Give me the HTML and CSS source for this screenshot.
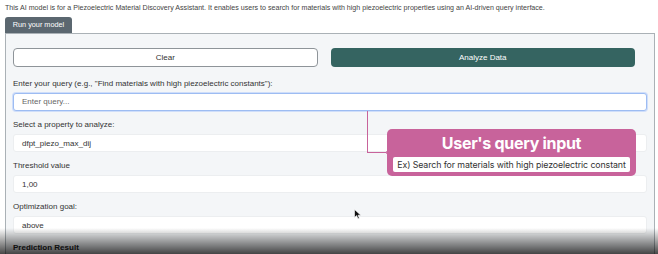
FILE: index.html
```html
<!DOCTYPE html>
<html lang="en">
<head>
    <meta charset="UTF-8">
    <title>Piezoelectric Material Discovery Assistant</title>
    <link rel="stylesheet" href="styles.css">
</head>
<body>
    <div class="page">
        <p class="intro">This AI model is for a Piezoelectric Material Discovery Assistant. It enables users to search for materials with high piezoelectric properties using an AI-driven query interface.</p>
        <div class="tab">Run your model</div>
        <div class="panel">
            <div class="btn-row">
                <div class="btn btn-clear">Clear</div>
                <div class="btn btn-run">Analyze Data</div>
            </div>
            <div class="field field-first">
                <div class="label">Enter your query (e.g., "Find materials with high piezoelectric constants"):</div>
                <div class="box box-focus placeholder">Enter query...</div>
            </div>
            <div class="field">
                <div class="label">Select a property to analyze:</div>
                <div class="box">dfpt_piezo_max_dij</div>
            </div>
            <div class="field">
                <div class="label">Threshold value</div>
                <div class="box">1,00</div>
            </div>
            <div class="field">
                <div class="label">Optimization goal:</div>
                <div class="box">above</div>
            </div>
            <div class="result">Prediction Result</div>
        </div>

        <!-- annotation over the form -->
        <div class="connector"></div>
        <div class="note">
            <div class="note-title">User's query input</div>
            <div class="note-body">Ex) Search for materials with high piezoelectric constant</div>
        </div>
        <svg class="cursor" width="8" height="11" viewBox="0 0 8 11">
            <path d="M0.5 0.5 L0.5 8.5 L2.6 6.6 L4 9.8 L5.3 9.2 L4 6.2 L6.8 6.2 Z" fill="#111" stroke="#fff" stroke-width="0.6"/>
        </svg>
        <div class="shade"></div>
    </div>
</body>
</html>
```

FILE: styles.css
```css
body{
    margin:0;
    background:#fff;
    font-family:"Liberation Sans",Arial,sans-serif;
    color:#333;
}
.page{
    position:relative;
    width:658px;
    height:254px;
    overflow:hidden;
}
.intro{
    margin:0;
    padding:3px 5px 0;
    font-size:7.1px;
    line-height:10px;
    color:#444;
    white-space:nowrap;
}
.tab{
    display:inline-block;
    margin:4px 0 0 5px;
    width:67px;
    height:16px;
    line-height:16px;
    text-align:center;
    background:#5b6770;
    color:#fff;
    font-size:7.3px;
    border-radius:3px 3px 0 0;
}
.panel{
    margin:0 3px 0 5px;
    height:260px;
    border:1px solid #aab1b6;
    border-bottom:none;
    background:#f4f6f8;
    padding:14px 7px 0 7px;
}
.btn-row{
    display:grid;
    grid-template-columns:1fr 1fr;
    gap:13px;
    margin-right:12px;
}
.btn{
    height:19px;
    line-height:19px;
    text-align:center;
    font-size:8px;
    border-radius:4px;
    box-sizing:border-box;
}
.btn-clear{
    background:#fff;
    border:1px solid #8e9499;
    color:#333;
    line-height:17px;
}
.btn-run{
    background:#356461;
    color:#fff;
}
.field{
    margin-top:9px;
}
.field-first{
    margin-top:12px;
}
.label{
    font-size:8px;
    line-height:10px;
    color:#333;
}
.box{
    margin-top:4px;
    height:18px;
    line-height:18px;
    box-sizing:border-box;
    background:#fff;
    border:1px solid #eceef0;
    border-radius:3px;
    padding:0 8px;
    font-size:8px;
    color:#333;
}
.box-focus{
    border:1px solid #9dbcf2;
    box-shadow:0 0 0 1px #cfdefa;
    line-height:16px;
}
.placeholder{
    color:#666;
}
.result{
    margin-top:9px;
    font-size:8px;
    line-height:10px;
    font-weight:bold;
    color:#222;
}
.connector{
    position:absolute;
    left:367px;
    top:111px;
    width:20px;
    height:41px;
    border-left:1px solid #c8639b;
    border-bottom:1px solid #c8639b;
}
.connector::after{
    content:"";
    position:absolute;
    right:-3px;
    bottom:-3px;
    width:3px;
    height:3px;
    border:1px solid #c8639b;
    border-radius:50%;
    background:#fff;
}
.note{
    position:absolute;
    left:387px;
    top:129px;
    width:249px;
    height:47px;
    box-sizing:border-box;
    padding:2px 6px 0;
    background:#c8639b;
    border-radius:5px;
    font-family:Inter,"Noto Sans",sans-serif;
}
.note-title{
    text-align:center;
    color:#fff;
    font-size:16px;
    font-weight:700;
    letter-spacing:-0.3px;
    line-height:24px;
}
.note-body{
    margin-top:2px;
    height:15px;
    line-height:15px;
    background:#fff;
    border-radius:2px;
    text-align:center;
    font-size:8.8px;
    color:#333;
    letter-spacing:-0.1px;
}
.cursor{
    position:absolute;
    left:354px;
    top:209px;
}
.shade{
    position:absolute;
    left:0;
    right:0;
    bottom:0;
    height:26px;
    background:linear-gradient(to bottom,rgba(0,0,0,0),rgba(0,0,0,0.72));
    pointer-events:none;
}
```
